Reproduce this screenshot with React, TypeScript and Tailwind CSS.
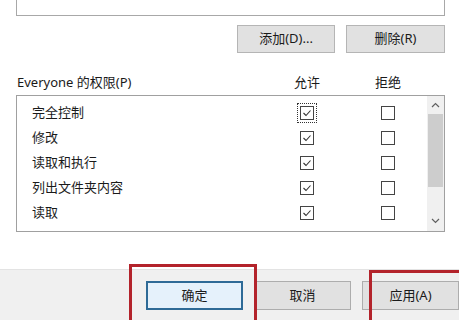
import React from 'react';

// 第 6 行只露出复选框的上沿，不显示文字
const rows = ['完全控制', '修改', '读取和执行', '列出文件夹内容', '读取', ''];

const Check = ({ checked, focus }: { checked?: boolean; focus?: boolean }) => (
    <div className={`flex items-center justify-center w-[20px] h-[20px] ${focus ? 'outline outline-1 outline-dotted outline-[#333] -outline-offset-1' : ''}`}>
        <div className="w-[14px] h-[14px] border border-[#444] bg-white flex items-center justify-center">
            {checked && (
                <svg width="10" height="10" viewBox="0 0 10 10">
                    <polyline points="1.5,5 4,7.5 8.5,2.5" fill="none" stroke="#333" strokeWidth="1.1" />
                </svg>
            )}
        </div>
    </div>
);

const Btn = ({ text, primary }: { text: string; primary?: boolean }) => (
    <button
        className={`h-[29px] w-[99px] text-[13px] text-[#1a1a1a] border ${
            primary ? 'bg-[#e5f1fb] border-[#2e6a96] border-2' : 'bg-[#e1e1e1] border-[#adadad]'
        }`}
    >
        {text}
    </button>
);

export default function App() {
    return (
        <div
            className="relative w-[459px] h-[320px] bg-white overflow-hidden flex flex-col text-[#1a1a1a]"
            style={{ fontFamily: '"Segoe UI", "Noto Sans", "Noto Sans CJK SC", sans-serif' }}
        >
            {/* 上方用户列表 */}
            <div className="mx-[16px] w-[429px] h-[16px] border-l border-r border-b border-[#a8a8a8]" />

            <div className="flex justify-end gap-[11px] pr-[14px] mt-[9px]">
                <button className="h-[28px] w-[98px] text-[13px] bg-[#e1e1e1] border border-[#b5b5b5]">添加(D)...</button>
                <button className="h-[28px] w-[99px] text-[13px] bg-[#e1e1e1] border border-[#b5b5b5]">删除(R)</button>
            </div>

            <div className="flex items-center mt-[20px] h-[20px] text-[13px]">
                <div className="w-[282px] pl-[17px]">Everyone 的权限(P)</div>
                <div className="w-[50px] text-center">允许</div>
                <div className="w-[50px] ml-[31px] text-center">拒绝</div>
            </div>

            <div className="ml-[16px] mt-[2px] w-[429px] h-[137px] border border-[#a0a0a0] flex overflow-hidden">
                <div className="flex-1 pt-[4px] overflow-hidden">
                    {rows.map((r, i) => (
                        <div key={i} className="flex items-center h-[25px] text-[13px]">
                            <div className="w-[265px] pl-[15px]">{r}</div>
                            <div className="w-[50px] flex justify-center">
                                <Check checked focus={i === 0} />
                            </div>
                            <div className="w-[50px] ml-[31px] flex justify-center">
                                <Check />
                            </div>
                        </div>
                    ))}
                </div>
                <div className="w-[17px] bg-[#f0f0f0] flex flex-col items-center">
                    <div className="h-[18px] flex items-center justify-center">
                        <svg width="9" height="6" viewBox="0 0 9 6">
                            <polyline points="1,5 4.5,1.5 8,5" fill="none" stroke="#606060" strokeWidth="1.2" />
                        </svg>
                    </div>
                    <div className="w-[15px] h-[73px] bg-[#cdcdcd]" />
                    <div className="flex-1" />
                    <div className="h-[20px] flex items-center justify-center">
                        <svg width="9" height="6" viewBox="0 0 9 6">
                            <polyline points="1,1 4.5,4.5 8,1" fill="none" stroke="#606060" strokeWidth="1.2" />
                        </svg>
                    </div>
                </div>
            </div>

            {/* 底部按钮栏 */}
            <div className="mt-[37px] flex-1 bg-[#f0f0f0] border-t border-[#e3e3e3] flex pl-[146px] pt-[11px] gap-[11px]">
                <Btn text="确定" primary />
                <Btn text="取消" />
                <Btn text="应用(A)" />
            </div>

            {/* 红色标注框 */}
            <div className="absolute left-[129px] top-[264px] w-[128px] h-[70px] border-[3px] border-[#b3232b]" />
            <div className="absolute left-[369px] top-[270px] w-[100px] h-[70px] border-[3px] border-[#b3232b]" />
        </div>
    );
}
